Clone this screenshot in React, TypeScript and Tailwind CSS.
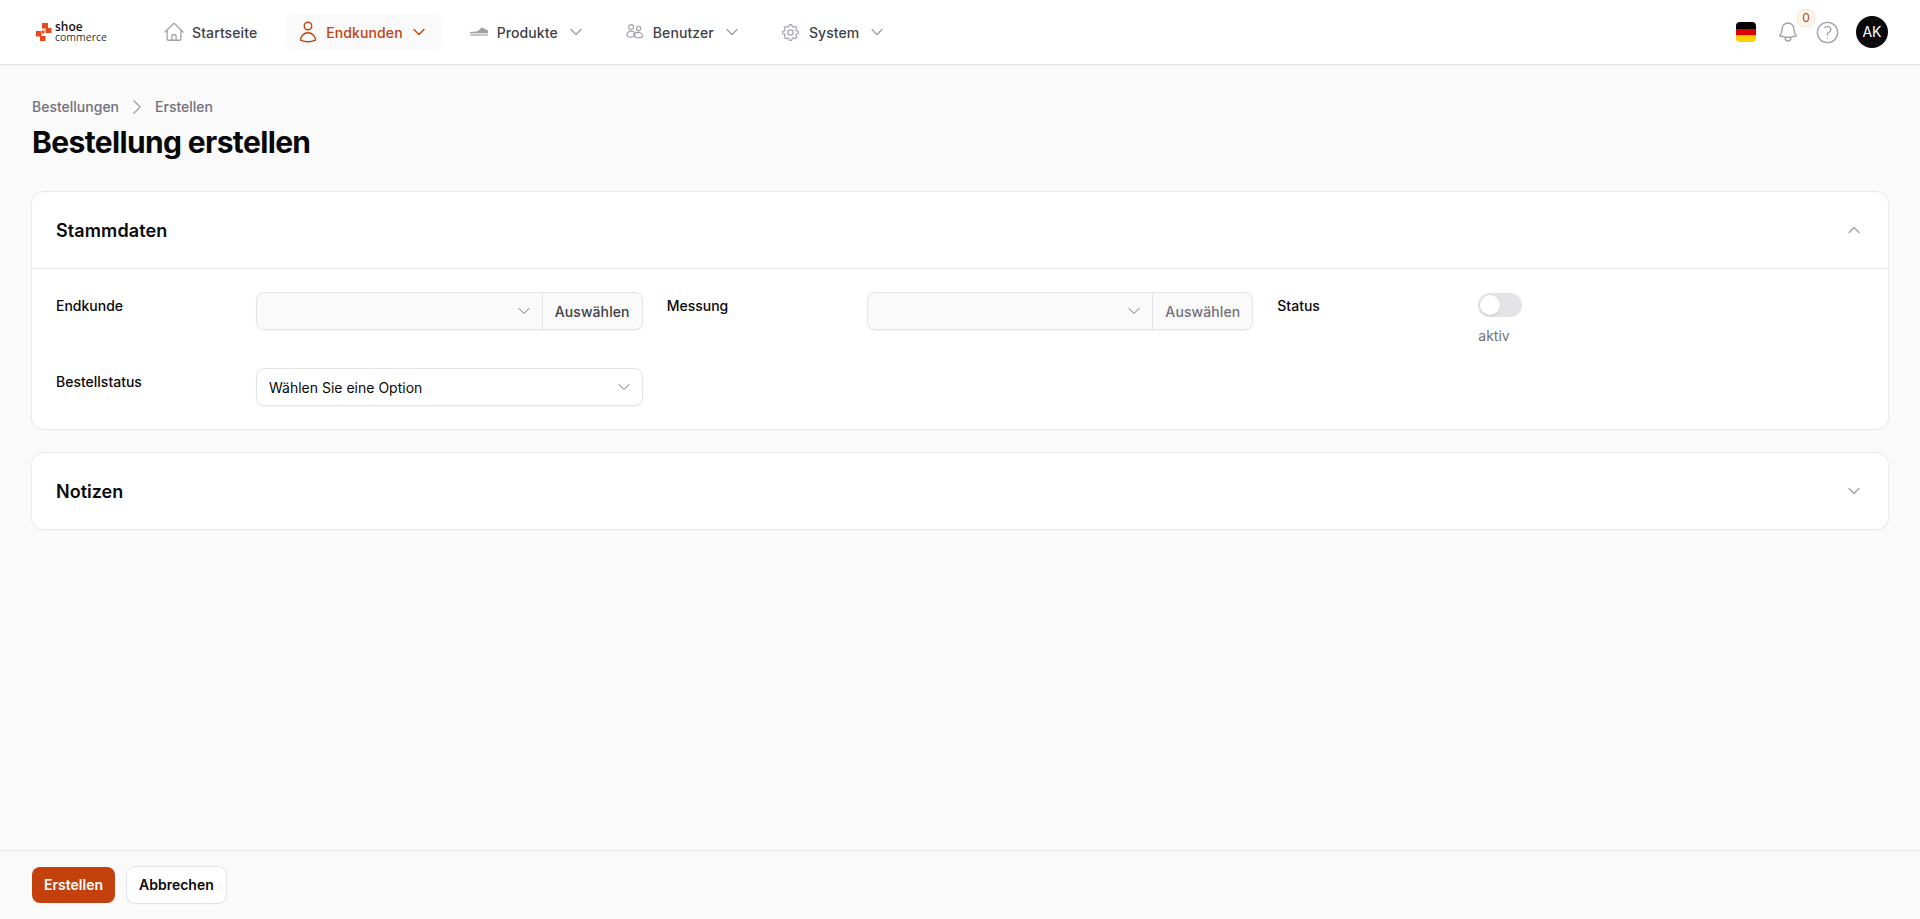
import { FC, ReactNode } from "react";
import {
  HiOutlineBell,
  HiOutlineChevronDown,
  HiOutlineChevronRight,
  HiOutlineChevronUp,
  HiOutlineCog8Tooth,
  HiOutlineHome,
  HiOutlineQuestionMarkCircle,
  HiOutlineUser,
} from "react-icons/hi2";

const Logo: FC = () => (
  <div className="flex w-[72px] items-center gap-[3px]">
    <svg width="16" height="18" viewBox="0 0 16 18" className="shrink-0" fill="#e8481c">
      <rect x="6" y="0" width="6" height="5.500" />
      <rect x="9.500" y="5" width="6" height="5" />
      <rect x="6" y="7.500" width="2.500" height="3" />
      <rect x="0" y="8" width="5.500" height="5.500" />
      <rect x="4" y="13" width="5.500" height="5" />
    </svg>
    <div className="flex flex-col font-['Open_Sans',sans-serif]">
      <span className="text-[12px] leading-[10px] font-semibold text-[#111]">shoe</span>
      <span className="text-[10.500px] leading-[10px] text-[#333]">commerce</span>
    </div>
  </div>
);

const ShoeIcon: FC = () => (
  <svg width="18" height="10" viewBox="0 0 18 10" className="text-[#a1a1aa]">
    <path d="M0 5 6 4.600 8 4l3.300-3.200c.6-.5 1-.5 1.400 0 .8.900 2.100 1.300 3.500 1.600.5.200 1.800.8 1.800 1.400V6H0z" fill="currentColor" />
    <rect x="0" y="6.500" width="18" height="2.500" rx="1.200" fill="#c4c4c9" />
  </svg>
);

const UsersIcon: FC = () => (
  <svg width="18" height="16" viewBox="0 0 20 18" fill="none" stroke="#a1a1aa" strokeWidth="1.300" className="shrink-0">
    <circle cx="5.500" cy="3.500" r="2.800" />
    <circle cx="14" cy="5" r="2.500" />
    <path d="M1 13c0-3 2-5 4.800-5 1.700 0 3 .6 3.900 1.800-.9.900-1.300 2-1.300 3.300 0 .6-.2 1-.6 1.200C5.400 15.300 1 14.500 1 13z" />
    <path d="M9.500 13.500c0-2.300 1.900-4 4.300-4s4.700 1.700 4.700 4c0 2.600-9 2.600-9 0z" />
  </svg>
);

type NavItemProps = {
  icon: ReactNode;
  label: string;
  active?: boolean;
  dropdown?: boolean;
};

const NavItem: FC<NavItemProps> = ({ icon, label, active, dropdown }) => (
  <div
    className={
      active
        ? "flex h-9 items-center rounded-lg bg-[#fafafa] pl-[10px] pr-[15px] text-[#c2410c]"
        : "flex h-9 items-center rounded-lg pl-[10px] pr-[14px] text-[#3f3f46]"
    }
  >
    <span className="mr-[6px] flex size-6 items-center justify-center">{icon}</span>
    <span className="pt-[2px] text-sm font-medium tracking-[0.1px]">{label}</span>
    {dropdown && (
      <HiOutlineChevronDown
        className={active ? "ml-[8px] size-4 text-[#c2410c]" : "ml-[10px] size-4 text-[#a1a1aa]"}
        strokeWidth={2}
      />
    )}
  </div>
);

const Label: FC<{ children: ReactNode }> = ({ children }) => (
  <div className="w-[200px] shrink-0 pt-[4px] text-sm font-medium text-[#09090b]">{children}</div>
);

const PickerField: FC<{ muted?: boolean }> = ({ muted }) => (
  <div className="flex h-[38px] flex-1 rounded-lg border border-[#e4e4e7] bg-[#fafafa] shadow-xs">
    <div className="flex flex-1 items-center justify-end pr-[10px]">
      <HiOutlineChevronDown className="size-4 text-[#71717a]" strokeWidth={1.5} />
    </div>
    <div
      className={
        muted
          ? "flex w-[100px] items-center justify-center border-l border-[#e4e4e7] pt-px text-sm font-medium tracking-[0.1px] text-[#71717a]"
          : "flex w-[100px] items-center justify-center border-l border-[#e4e4e7] pt-px text-sm font-medium tracking-[0.1px] text-[#3f3f46]"
      }
    >
      Auswählen
    </div>
  </div>
);

export default function App() {
  return (
    <div className="flex min-h-screen flex-col bg-[#fafafa] font-['Inter',sans-serif]">
      <header className="flex h-[65px] items-center border-b border-[#e4e4e7] bg-white pl-[36px] pr-[32px] shadow-xs">
        <Logo />
        <nav className="ml-[44px] flex items-center gap-[15px]">
          <NavItem icon={<HiOutlineHome className="size-[22px] text-[#a1a1aa]" strokeWidth={1.4} />} label="Startseite" />
          <NavItem icon={<HiOutlineUser className="size-6" strokeWidth={1.4} />} label="Endkunden" active dropdown />
          <NavItem icon={<ShoeIcon />} label="Produkte" dropdown />
          <NavItem icon={<UsersIcon />} label="Benutzer" dropdown />
          <NavItem icon={<HiOutlineCog8Tooth className="size-[21px] text-[#a1a1aa]" strokeWidth={1.3} />} label="System" dropdown />
        </nav>
        <div className="ml-auto flex items-center">
          <svg width="20" height="20" viewBox="0 0 20 20" className="mr-[20px]">
            <clipPath id="flag">
              <rect width="20" height="20" rx="4" />
            </clipPath>
            <g clipPath="url(#flag)">
              <rect width="20" height="7" fill="#000" />
              <rect y="7" width="20" height="6.500" fill="#d00" />
              <rect y="13.500" width="20" height="6.500" fill="#ffce00" />
            </g>
          </svg>
          <div className="relative mr-[14px]">
            <HiOutlineBell className="size-6 text-[#a1a1aa]" strokeWidth={1.4} />
            <span className="absolute -right-[14px] -top-[10px] flex size-4 items-center justify-center rounded-md bg-[#fff7ed] text-xs text-[#c2410c] ring-1 ring-[#fde3d6]">
              0
            </span>
          </div>
          <HiOutlineQuestionMarkCircle className="mr-[15px] size-[27px] text-[#a1a1aa]" strokeWidth={1.2} />
          <div className="flex size-8 items-center justify-center rounded-full bg-[#09090b] text-sm text-white">AK</div>
        </div>
      </header>

      <main className="flex-1 px-8 pt-[32px]">
        <div className="flex h-5 items-center text-sm font-medium text-[#71717a]">
          <span>Bestellungen</span>
          <HiOutlineChevronRight className="mx-2 size-5 text-[#a1a1aa]" strokeWidth={1.5} />
          <span>Erstellen</span>
        </div>
        <h1 className="mt-[7px] text-3xl font-bold tracking-[-0.63px] text-[#09090b]">Bestellung erstellen</h1>

        <section className="mt-[32px] rounded-xl bg-white shadow-xs ring-1 ring-[#e9e9ec]">
          <div className="flex h-[76px] items-center justify-between px-6">
            <h2 className="pt-[2px] text-lg font-semibold tracking-[0.1px] text-[#09090b]">Stammdaten</h2>
            <HiOutlineChevronUp className="mr-[2px] size-4 text-[#a1a1aa]" strokeWidth={2} />
          </div>
          <div className="grid grid-cols-3 gap-x-6 gap-y-[22px] border-t border-[#e4e4e7] px-6 pb-[23px] pt-[23px]">
            <div className="flex">
              <Label>Endkunde</Label>
              <PickerField />
            </div>
            <div className="flex">
              <Label>Messung</Label>
              <PickerField muted />
            </div>
            <div className="flex">
              <Label>Status</Label>
              <div className="ml-px pt-px">
                <div className="flex h-6 w-11 items-center rounded-full bg-[#e4e4e7] p-[2px]">
                  <span className="size-5 rounded-full bg-white shadow-sm" />
                </div>
                <p className="mt-[9px] text-sm text-[#71717a]">aktiv</p>
              </div>
            </div>
            <div className="flex">
              <Label>Bestellstatus</Label>
              <div className="flex h-[38px] flex-1 items-center justify-between rounded-lg border border-[#e4e4e7] bg-white pl-[12px] pr-[10px] shadow-xs">
                <span className="pt-px text-sm text-[#09090b]">Wählen Sie eine Option</span>
                <HiOutlineChevronDown className="size-4 text-[#71717a]" strokeWidth={1.5} />
              </div>
            </div>
          </div>
        </section>

        <section className="mt-6 flex h-[76px] items-center justify-between rounded-xl bg-white px-6 shadow-xs ring-1 ring-[#e9e9ec]">
          <h2 className="pt-[2px] text-lg font-semibold text-[#09090b]">Notizen</h2>
          <HiOutlineChevronDown className="mr-[2px] size-4 text-[#a1a1aa]" strokeWidth={2} />
        </section>
      </main>

      <footer className="flex gap-3 border-t border-[#e4e4e7] px-8 py-4">
        <button className="h-9 rounded-lg bg-[#c2410c] px-3 text-sm font-semibold text-white">Erstellen</button>
        <button className="h-9 rounded-lg bg-white px-3 text-sm font-semibold text-[#09090b] shadow-xs ring-1 ring-[#e4e4e7]">
          Abbrechen
        </button>
      </footer>
    </div>
  );
}
